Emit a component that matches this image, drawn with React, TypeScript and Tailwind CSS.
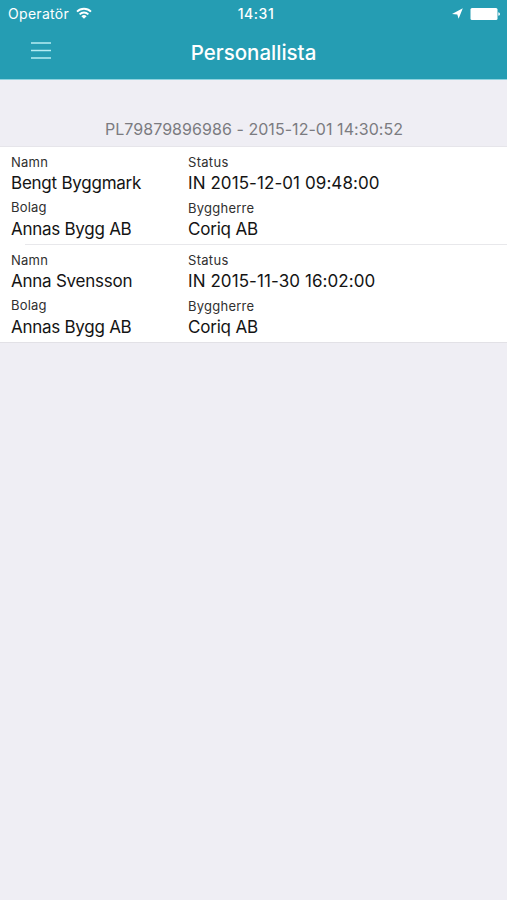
interface Person {
  name: string
  company: string
  status: string
  developer: string
}

const people: Person[] = [
  {
    name: 'Bengt Byggmark',
    company: 'Annas Bygg AB',
    status: 'IN 2015-12-01 09:48:00',
    developer: 'Coriq AB',
  },
  {
    name: 'Anna Svensson',
    company: 'Annas Bygg AB',
    status: 'IN 2015-11-30 16:02:00',
    developer: 'Coriq AB',
  },
]

function WifiIcon() {
  return (
    <svg className="w-[16px] h-[12px] -mt-[2px]" viewBox="0 0 16 12" fill="none" stroke="#fff" strokeWidth="1.8">
      <path d="M1 4.6a10 10 0 0 1 14 0" />
      <path d="M3.6 7.3a6.3 6.3 0 0 1 8.8 0" />
      <path d="M8 11.8 5.4 9.2a3.7 3.7 0 0 1 5.2 0z" fill="#fff" stroke="none" />
    </svg>
  )
}

function StatusBar() {
  return (
    <div className="grid grid-cols-3 items-center h-[27px] pl-[8px] pr-[6px] text-[14px]">
      <div className="flex items-center gap-[7px]">
        <span className="tracking-[0.3px]">Operatör</span>
        <WifiIcon />
      </div>
      <div className="text-center font-medium tracking-[0.55px] pl-[3px]">14:31</div>
      <div className="flex items-center justify-end gap-[7px]">
        <svg className="w-[11px] h-[11px]" viewBox="0 0 11 11" fill="#fff">
          <path d="M10.8.2 6.6 10.8 5.3 6.6 0 6z" />
        </svg>
        <svg className="w-[31px] h-[12px]" viewBox="0 0 31 12" fill="#fff">
          <rect x="0.5" y="0" width="27" height="12" rx="1.5" />
          <path d="M28.3 4.2c2.2.4 2.2 3.2 0 3.6z" />
        </svg>
      </div>
    </div>
  )
}

function NavBar() {
  return (
    <div className="grid grid-cols-[1fr_auto_1fr] items-center h-[51px]">
      <button className="ml-[31px] w-[20px] -mt-[4px]" aria-label="Meny">
        <svg className="block w-[20px] h-[17px]" viewBox="0 0 20 17" stroke="#b5edf4" strokeWidth="1.5">
          <path d="M0 1h20M0 8.5h20M0 16h20" />
        </svg>
      </button>
      <h1 className="text-[20.5px] leading-[26px] font-medium">Personallista</h1>
    </div>
  )
}

function PersonRow({ person }: { person: Person }) {
  return (
    <div className="flex h-[97px] pl-[11px] pt-[6px]">
      <dl className="w-[177px] whitespace-nowrap">
        <dt className="text-[13px] leading-[18px] tracking-[0.25px] text-[#303030]">Namn</dt>
        <dd className="text-[17px] leading-[24px] tracking-[-0.24px]">{person.name}</dd>
        <dt className="mt-[3px] text-[13px] leading-[18px] tracking-[0.2px] text-[#303030]">Bolag</dt>
        <dd className="mt-[1px] text-[17px] leading-[24px] tracking-[-0.27px]">{person.company}</dd>
      </dl>
      <dl className="whitespace-nowrap">
        <dt className="text-[13px] leading-[18px] tracking-[0.3px] text-[#303030]">Status</dt>
        <dd className="text-[17px] leading-[24px] tracking-[0.08px]">{person.status}</dd>
        <dt className="mt-[4px] text-[13px] leading-[18px] tracking-[0.25px] text-[#303030]">Byggherre</dt>
        <dd className="text-[17px] leading-[24px] tracking-[-0.2px]">{person.developer}</dd>
      </dl>
    </div>
  )
}

function App() {
  return (
    <div className="h-[900px] w-[507px] overflow-hidden bg-[#efeef4] text-[#141414] font-[Inter,sans-serif]">
      <header className="h-[80px] bg-[#259db3] text-white border-b border-[#8fd3df]">
        <StatusBar />
        <NavBar />
      </header>

      <div className="h-[67px] pt-[38px] pl-[1px] border-b border-[#e6e5ea] text-center text-[16px] leading-[22px] tracking-[0.05px] text-[#7b7b80]">
        PL79879896986 - 2015-12-01 14:30:52
      </div>

      <main className="bg-white border-b border-[#e2e1e6]">
        {people.map((person, i) => (
          <div key={person.name}>
            {i > 0 && <div className="ml-[25px] h-px bg-[#e8e8eb]" />}
            <PersonRow person={person} />
          </div>
        ))}
      </main>
    </div>
  )
}

export default App
